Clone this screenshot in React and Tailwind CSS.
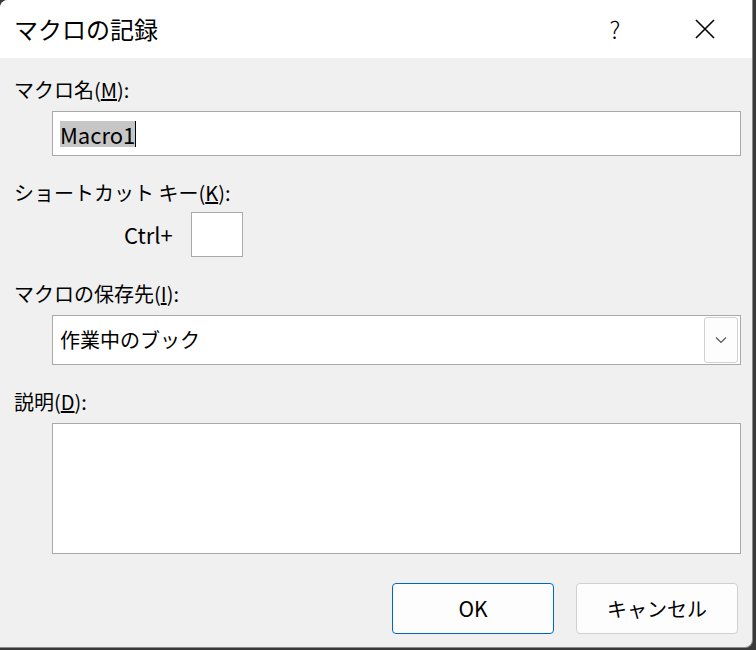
export default function App() {
  const font = { fontFamily: '"Noto Sans CJK JP", "Noto Sans", sans-serif' };
  return (
    <div className="w-[756px] h-[650px] bg-[#3a3a3a] relative overflow-hidden" style={font}>
      <div className="absolute left-0 top-0 w-[753px] h-[648px] rounded-tl-[8px] rounded-br-[8px] bg-[#f0f0f0] border-r border-b border-[#8a8a8a] flex flex-col text-[#000]">
        <div className="h-[58px] bg-white rounded-tl-[8px] flex items-center pl-[14px] text-[24px]">
          <span className="flex-1">マクロの記録</span>
          <span className="w-[90px] text-center text-[24px] font-light">?</span>
          <span className="w-[90px] flex justify-center mr-[2px]">
            <svg width="22" height="22" viewBox="0 0 22 22" stroke="#000" strokeWidth="1.6"><path d="M2 2L20 20M20 2L2 20" /></svg>
          </span>
        </div>
        <div className="flex flex-col px-[14px] text-[20px]">
          <div className="mt-[17px] h-[30px] leading-[30px]">マクロ名(<u>M</u>):</div>
          <div className="ml-[38px] mt-[6px] w-[689px] h-[45px] bg-white border border-[#a9a9a9] flex items-center px-[7px] text-[22px]">
            <span className="bg-[#c6c6c6] leading-[26px]">Macro1</span><span className="w-px h-[26px] bg-black" />
          </div>
          <div className="mt-[22px] h-[30px] leading-[30px]">ショートカット キー(<u>K</u>):</div>
          <div className="mt-[4px] flex items-center ml-[110px]">
            <span className="text-[22px] w-[67px]">Ctrl+</span>
            <div className="w-[52px] h-[45px] bg-white border border-[#a9a9a9]" />
          </div>
          <div className="mt-[22px] h-[30px] leading-[30px]">マクロの保存先(<u>I</u>):</div>
          <div className="ml-[38px] mt-[6px] w-[689px] h-[50px] bg-white border border-[#a9a9a9] flex items-center pl-[7px] pr-[2px]">
            <span className="flex-1">作業中のブック</span>
            <div className="w-[34px] h-[46px] border border-[#d0d0d0] rounded-[3px] bg-[#fdfdfd] flex items-center justify-center">
              <svg width="12" height="8" viewBox="0 0 12 8" fill="none" stroke="#555" strokeWidth="1.2"><path d="M1 1.5L6 6.5L11 1.5" /></svg>
            </div>
          </div>
          <div className="mt-[22px] h-[30px] leading-[30px]">説明(<u>D</u>):</div>
          <div className="ml-[38px] mt-[6px] w-[689px] h-[131px] bg-white border border-[#a9a9a9]" />
          <div className="mt-[29px] flex justify-end gap-[22px] pr-[0px]">
            <button className="w-[162px] h-[51px] bg-[#fdfdfd] border border-[#0067c0] rounded-[4px] text-[21px]">OK</button>
            <button className="w-[162px] h-[51px] bg-[#fdfdfd] border border-[#d0d0d0] rounded-[4px] text-[20px]">キャンセル</button>
          </div>
        </div>
      </div>
    </div>
  );
}
